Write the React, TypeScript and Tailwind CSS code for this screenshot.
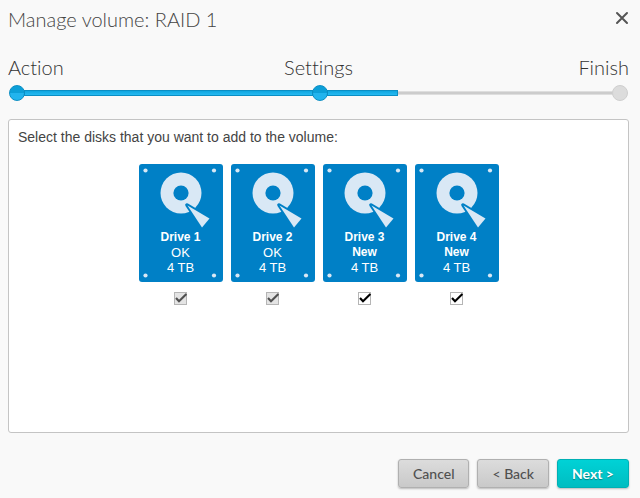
import React, { useState } from 'react';

interface Drive {
  id: number;
  name: string;
  status: 'OK' | 'New';
  size: string;
}

const steps = ['Action', 'Settings', 'Finish'];

const drives: Drive[] = [
  { id: 1, name: 'Drive 1', status: 'OK', size: '4 TB' },
  { id: 2, name: 'Drive 2', status: 'OK', size: '4 TB' },
  { id: 3, name: 'Drive 3', status: 'New', size: '4 TB' },
  { id: 4, name: 'Drive 4', status: 'New', size: '4 TB' },
];

const Dot: React.FC<{ done?: boolean }> = ({ done }) => (
  <span
    className={
      done
        ? 'size-4 shrink-0 rounded-full border border-[#0b8fc4] bg-linear-to-b from-[#0c9fd8] from-50% to-[#22b4ee] to-50%'
        : 'size-4 shrink-0 rounded-full border border-[#cfcfcf] bg-[#dcdcdc]'
    }
  />
);

const DoneBar: React.FC<{ className: string }> = ({ className }) => (
  <span
    className={`h-1.5 border border-[#0b8fc4] bg-linear-to-b from-[#0ea6e0] to-[#25baf2] ${className}`}
  />
);

const Stepper: React.FC = () => (
  <div className="mt-5">
    <ol className="grid grid-cols-3 text-xl font-light text-[#333] [font-variant-ligatures:none]">
      <li>{steps[0]}</li>
      <li className="text-center">{steps[1]}</li>
      <li className="text-right">{steps[2]}</li>
    </ol>
    <div className="mx-px mt-1 flex items-center">
      <Dot done />
      <DoneBar className="-mx-px flex-1" />
      <Dot done />
      <div className="-mx-px flex flex-1 items-center">
        <DoneBar className="w-1/4" />
        <span className="h-1 flex-1 border-y border-[#dedede] bg-[#cccccc]" />
      </div>
      <Dot />
    </div>
  </div>
);

const DriveIcon: React.FC = () => (
  <svg viewBox="0 0 84 118" className="col-start-1 row-start-1 h-[118px] w-[84px]" aria-hidden="true">
    <rect width="84" height="118" rx="3" fill="#0080c6" />
    <g fill="#d9e8f5">
      <circle cx="6.5" cy="6.5" r="2.1" />
      <circle cx="75" cy="6.5" r="2.1" />
      <circle cx="6.5" cy="111.5" r="2.1" />
      <circle cx="75" cy="111.5" r="2.1" />
      <circle cx="42" cy="29" r="20.5" />
    </g>
    <circle cx="42" cy="29" r="7.6" fill="#0080c6" />
    <path
      d="M48 41 70.5 54.5 63 63.5Z"
      fill="#0080c6"
      stroke="#0080c6"
      strokeWidth="3.6"
      strokeLinejoin="round"
    />
    <path d="M48.5 41.5 70.5 54.5 63 63.5Z" fill="#d9e8f5" />
  </svg>
);

const DriveCard: React.FC<{ drive: Drive; checked: boolean; onToggle: () => void }> = ({
  drive,
  checked,
  onToggle,
}) => {
  const inUse = drive.status === 'OK';

  return (
    <label className="flex flex-col items-center">
      <span className="grid">
        <DriveIcon />
        <span className="col-start-1 row-start-1 flex flex-col items-center pt-[66px] text-[13px] leading-[15px] text-white">
          <span className="text-[12px] leading-[15px] font-bold">{drive.name}</span>
          <span className={inUse ? '' : 'text-[12px] leading-[15px] font-bold'}>{drive.status}</span>
          <span>{drive.size}</span>
        </span>
      </span>
      <span className="mt-2.5 grid">
        <input
          type="checkbox"
          checked={checked}
          disabled={inUse}
          onChange={onToggle}
          className="peer col-start-1 row-start-1 size-[13px] appearance-none border border-[#b5b5b5] bg-white disabled:bg-[#e4e4e4]"
        />
        <svg
          viewBox="0 0 13 13"
          className="pointer-events-none invisible col-start-1 row-start-1 size-[13px] overflow-visible text-black peer-checked:visible peer-disabled:text-[#505050]"
          aria-hidden="true"
        >
          <path d="M2 6 5 9.3 12.4 2" fill="none" stroke="currentColor" strokeWidth="2.1" />
        </svg>
      </span>
    </label>
  );
};

const greyButton =
  'h-[29px] rounded-[3px] border border-[#b0b0b0] bg-linear-to-b from-[#dcdcdc] to-[#c9c9c9] px-3.5 text-sm font-medium text-[#505050] shadow-[0_1px_2px_rgba(0,0,0,0.25)]';

export default function App() {
  const [selected, setSelected] = useState<number[]>([1, 2, 3, 4]);

  const toggle = (id: number) => {
    setSelected((prev) => (prev.includes(id) ? prev.filter((d) => d !== id) : [...prev, id]));
  };

  return (
    <div className="flex min-h-screen flex-col bg-[#f9f9f9] pt-[5px] pr-[11px] pb-2.5 pl-2 font-['Lato',sans-serif]">
      <header className="flex items-start justify-between">
        <h1 className="text-xl font-light text-[#444]">Manage volume: RAID 1</h1>
        <button type="button" aria-label="Close" className="mt-1.5">
          <svg viewBox="0 0 14 14" className="size-3.5" aria-hidden="true">
            <path d="M2 2 12 12M12 2 2 12" stroke="#555" strokeWidth="2" strokeLinecap="round" />
          </svg>
        </button>
      </header>

      <Stepper />

      {/* Disk selection */}
      <main className="mt-[18px] flex-1 rounded-[3px] border border-[#c4c4c4] bg-white px-[9px] pt-[7px] font-['Liberation_Sans',Arial,sans-serif]">
        <p className="text-sm text-[#444]">Select the disks that you want to add to the volume:</p>
        <div className="mt-[17px] flex justify-center gap-2">
          {drives.map((drive) => (
            <DriveCard
              key={drive.id}
              drive={drive}
              checked={selected.includes(drive.id)}
              onToggle={() => toggle(drive.id)}
            />
          ))}
        </div>
      </main>

      <footer className="mt-[26px] flex justify-end gap-2">
        <button type="button" className={greyButton}>
          Cancel
        </button>
        <button type="button" className={greyButton}>
          &lt; Back
        </button>
        <button
          type="button"
          className="h-[29px] rounded-[3px] border border-[#00b0b4] bg-linear-to-b from-[#00d2d6] to-[#00bdc1] px-3.5 text-sm font-bold text-white shadow-[0_1px_2px_rgba(0,0,0,0.25)] text-shadow-[0_1px_1px_rgba(0,0,0,0.35)]"
        >
          Next &gt;
        </button>
      </footer>
    </div>
  );
}
